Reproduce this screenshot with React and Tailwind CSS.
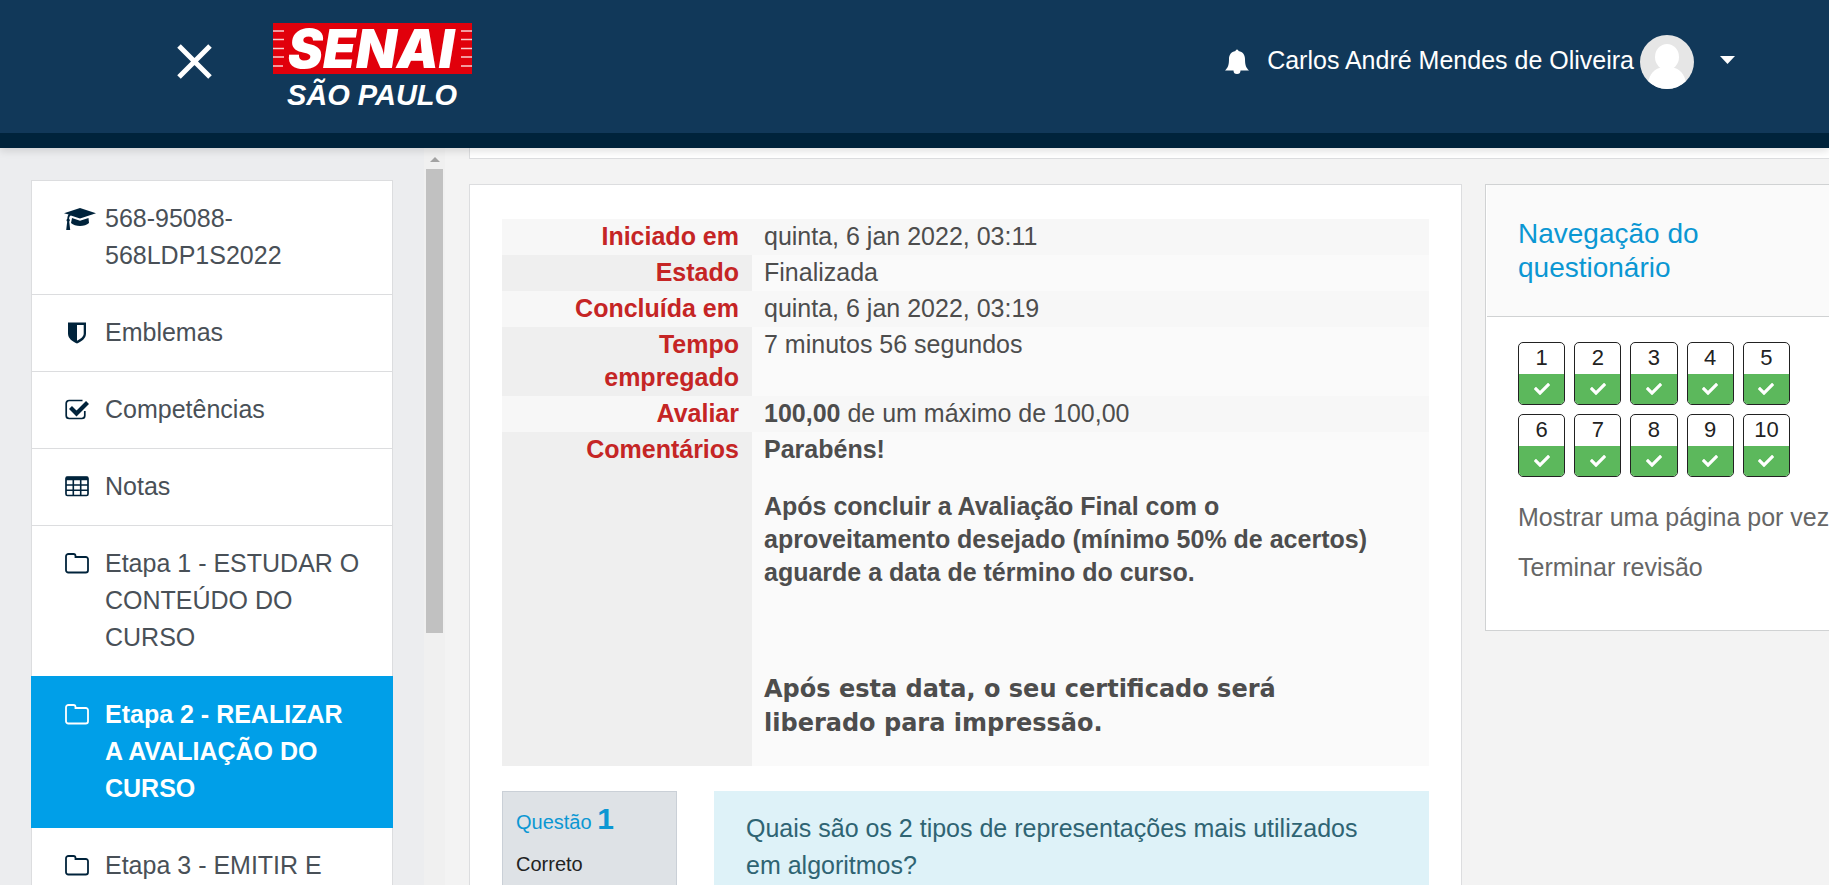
import { FaGraduationCap, FaCheck } from "react-icons/fa";

const navItems = [
  { icon: "cap", label: "568-95088-568LDP1S2022" },
  { icon: "shield", label: "Emblemas" },
  { icon: "check", label: "Competências" },
  { icon: "table", label: "Notas" },
  { icon: "folder", label: "Etapa 1 - ESTUDAR O CONTEÚDO DO CURSO" },
  { icon: "folder", label: "Etapa 2 - REALIZAR A AVALIAÇÃO DO CURSO", active: true },
  { icon: "folder", label: "Etapa 3 - EMITIR E" },
];

const summary = [
  ["Iniciado em", "quinta, 6 jan 2022, 03:11"],
  ["Estado", "Finalizada"],
  ["Concluída em", "quinta, 6 jan 2022, 03:19"],
  ["Tempo empregado", "7 minutos 56 segundos"],
  ["Avaliar", <><b>100,00</b> de um máximo de 100,00</>],
];

function NavIcon({ name }) {
  if (name === "cap")
    return (
      <svg viewBox="0 0 32 22" className="-ml-px h-[22px] w-8" fill="currentColor" aria-hidden="true">
        <path d="M16 0l16 5.200L16 10.400 6.800 7.400C5.600 8 5.200 9 5.100 10.800c1 .8 1 2 .1 2.800l1 8.400H2.200l1-8.400c-.9-.8-.9-2 .1-2.800.1-1.800.5-3.200 1.300-4.200L0 5.200z" />
        <path d="M8 10l8 2.800L24.500 10l.5 5c-2 2-5.500 3-9 3s-7-1-9-3z" />
      </svg>
    );
  if (name === "shield")
    return (
      <svg viewBox="0 0 20 22" className="ml-[2px] h-[22px] w-5" fill="currentColor" aria-hidden="true">
        <path fillRule="evenodd" d="M1 0.5h18v11c0 5-4.500 8-9 10C5.500 19.500 1 16.500 1 11.500zM10 3v15.800c3.500-1.800 6.700-4 6.700-7.300V3z" />
      </svg>
    );
  if (name === "check")
    return (
      <svg viewBox="0 0 24 22" className="h-[22px] w-6" fill="none" stroke="currentColor" aria-hidden="true">
        <path d="M17.500 1.500H4.200A3 3 0 0 0 1.200 4.500v12a3 3 0 0 0 3 3h12.600a3 3 0 0 0 3-3v-4.500" strokeWidth="1.700" />
        <path d="M5.500 8.500l6 6L22.500 3.500" strokeWidth="4.200" />
      </svg>
    );
  if (name === "table")
    return (
      <svg viewBox="0 0 24 22" className="h-[22px] w-6" fill="none" stroke="currentColor" aria-hidden="true">
        <rect x="1" y="1" width="22" height="18.500" rx="1.500" strokeWidth="1.700" />
        <path d="M1 2.500h22" strokeWidth="3.500" />
        <path d="M1 9h22M1 14.300h22M8.300 4v16M15.700 4v16" strokeWidth="1.600" />
      </svg>
    );
  return (
    <svg viewBox="0 0 24 22" className="h-[22px] w-6" fill="none" stroke="currentColor" strokeWidth="1.800" aria-hidden="true">
      <path d="M1 3.500a2.500 2.500 0 0 1 2.500-2.500h5A2 2 0 0 1 10.500 3v1h10.300A2.200 2.200 0 0 1 23 6.200v11A2.300 2.300 0 0 1 20.700 19.500H3.300A2.300 2.300 0 0 1 1 17.200z" />
    </svg>
  );
}

function Logo() {
  return (
    <a href="#inicio" aria-label="SENAI São Paulo">
      <svg viewBox="0 0 200 88" className="h-[88px] w-[200px] overflow-visible" aria-hidden="true">
        <rect width="199" height="51" fill="#e1000b" />
        <path
          d="M0 8h11M0 16.500h11M0 25.500h11M0 34h11M0 43h10M188 8h11M188 16.500h11M188 25.500h11M188 34h11M188 43h11"
          stroke="#fff"
          strokeOpacity="0.8"
          strokeWidth="1.700"
        />
        <text x="98" y="45" textAnchor="middle" fill="#fff" fontFamily="Inter, Arial, sans-serif" fontSize="53" fontWeight="900" fontStyle="italic">
          SENAI
        </text>
        <text x="99" y="82" textAnchor="middle" fill="#fff" fontFamily="Liberation Sans, Arial, sans-serif" fontSize="29" fontWeight="700" fontStyle="italic">
          SÃO PAULO
        </text>
      </svg>
    </a>
  );
}

function Header() {
  return (
    <header className="relative z-10 flex h-[148px] shrink-0 items-start border-b-[15px] border-[#00233b] bg-[#113859] pt-[23px] pr-[94px] pl-[177px] text-white shadow-[0_3px_8px_rgba(0,0,0,0.12)]">
      <button type="button" aria-label="Fechar menu" className="mt-[21px] mr-[61px]">
        <svg viewBox="0 0 35 35" className="size-[35px]" fill="none" stroke="currentColor" strokeWidth="5" aria-hidden="true">
          <path d="M2 2l31 31M33 2L2 33" />
        </svg>
      </button>
      <Logo />
      <div className="ml-auto flex h-[78px] items-center">
        <button type="button" aria-label="Notificações" className="mr-[18px]">
          <svg viewBox="0 0 24 26" className="h-[26px] w-6" fill="currentColor" aria-hidden="true">
            <path d="M10.500 2a1.500 1.500 0 0 1 3 0C18 2.800 20 6 20 10c0 6 1 8.500 4 11.500H15.500a3.500 3.500 0 0 1-7 0H0C3 18.500 4 16 4 10c0-4 2-7.200 6.500-8z" />
          </svg>
        </button>
        <button type="button" className="flex items-center whitespace-nowrap text-[25px] leading-[37px]">
          <span className="pb-1">Carlos André Mendes de Oliveira</span>
          <svg viewBox="0 0 54 54" className="ml-[6px] size-[54px] rounded-full" aria-hidden="true">
            <rect width="54" height="54" fill="#e6e6e6" />
            <ellipse cx="27" cy="22" rx="12" ry="13" fill="#fff" />
            <path d="M22 32h10c8 2 12 7 14 15v7H8v-7c2-8 6-13 14-15z" fill="#fff" />
          </svg>
          <svg viewBox="0 0 15 8" className="mb-1 ml-[26px] h-2 w-[15px]" fill="currentColor" aria-hidden="true">
            <path d="M0 0h15L7.500 8z" />
          </svg>
        </button>
      </div>
    </header>
  );
}

function Sidebar() {
  return (
    <aside className="flex w-[445px] shrink-0 items-start overflow-hidden bg-[#ecedef]">
      <nav className="mt-8 mr-[31px] ml-[31px] flex-1 border border-[#dcdddf] bg-white">
        {navItems.map((item) => (
          <a
            key={item.label}
            href="#secao"
            className={
              item.active
                ? "-mx-px -mt-px flex border-b border-[#009fe8] bg-[#009fe8] pt-5 pr-8 pb-5 pl-[34px] font-bold text-white"
                : "flex border-b border-[#dcdddf] pt-[19px] pr-7 pb-5 pl-[33px] text-[#495057]"
            }
          >
            <span className={item.active ? "flex h-[37px] w-[40px] shrink-0 items-center text-white" : "flex h-[37px] w-[40px] shrink-0 items-center text-[#00233b]"}>
              <NavIcon name={item.icon} />
            </span>
            <span>{item.label}</span>
          </a>
        ))}
      </nav>
      <div className="flex w-[21px] flex-col items-center self-stretch bg-[#f0f0f0]" aria-hidden="true">
        <svg viewBox="0 0 10 5" className="mt-[9px] mb-[7px] h-[5px] w-[10px]" fill="#a3a3a3">
          <path d="M0 5h10L5 0z" />
        </svg>
        <div className="h-[464px] w-[17px] bg-[#c1c1c1]" />
      </div>
    </aside>
  );
}

function SummaryTable() {
  return (
    <table className="w-full table-fixed border-collapse text-left align-top text-[#4d4d4d]">
      <colgroup>
        <col className="w-[250px]" />
        <col />
      </colgroup>
      <tbody className="align-top leading-[33px]">
        {summary.map(([label, value]) => (
          <tr key={label} className="odd:bg-[#f7f7f7] even:bg-[#fafafa]">
            <th scope="row" className="pt-px pr-[13px] pb-[2px] pl-10 text-right font-bold text-[#c52525] [tr:nth-child(even)>&]:bg-[#efefef]">
              {label}
            </th>
            <td className="px-3 pt-px pb-[2px]">{value}</td>
          </tr>
        ))}
        <tr className="bg-[#fafafa]">
          <th scope="row" className="bg-[#efefef] pt-px pr-[13px] pl-10 text-right font-bold text-[#c52525]">
            Comentários
          </th>
          <td className="pt-px pr-12 pb-[26px] pl-3 font-bold">
            <p className="mb-6">Parabéns!</p>
            <p className="mb-6">Após concluir a Avaliação Final com o aproveitamento desejado (mínimo 50% de acertos) aguarde a data de término do curso.</p>
            <p className="mb-[26px]">&nbsp;</p>
            <p className="font-['DejaVu_Sans',sans-serif] text-[24px] leading-[34px]">Após esta data, o seu certificado será liberado para impressão.</p>
          </td>
        </tr>
      </tbody>
    </table>
  );
}

function QuizNavigation() {
  return (
    <section className="-mr-12 w-[392px] shrink-0 border border-[#d0d2d3] bg-white pb-[44px]">
      <h2 className="ml-px border-b border-[#d0d2d3] bg-[#fafafa] px-[31px] pt-8 pb-[31px] text-[28px] leading-[34px] text-[#0b97d3]">
        Navegação do
        <br />
        questionário
      </h2>
      <div className="pt-[25px] pl-8">
        <div className="grid w-[272px] grid-cols-5 gap-x-[9px] gap-y-[9px]">
          {[1, 2, 3, 4, 5, 6, 7, 8, 9, 10].map((n) => (
            <a key={n} href="#questao" className="flex h-[63px] flex-col overflow-hidden rounded-[5px] border border-[#222] text-center text-[22px] leading-[29px] text-[#222]">
              <span className="h-[31px]">{n}</span>
              <span className="flex flex-1 items-center justify-center bg-[#5cb85c] text-white">
                <FaCheck className="size-4" />
              </span>
            </a>
          ))}
        </div>
        <a href="#pagina" className="mt-[22px] block whitespace-nowrap leading-[37px] text-[#666]">Mostrar uma página por vez</a>
        <a href="#terminar" className="mt-[13px] block leading-[37px] text-[#666]">Terminar revisão</a>
      </div>
    </section>
  );
}

export default function App() {
  return (
    <div className="flex h-screen flex-col overflow-hidden bg-[#f3f3f3] font-['Liberation_Sans',Arial,sans-serif] text-[25px] leading-[37px]">
      <Header />
      <div className="flex min-h-0 flex-1">
        <Sidebar />
        <main className="min-w-0 flex-1 overflow-hidden pl-6">
          <div className="h-[11px] border-b border-l border-[#dcdddf] bg-white" />
          <div className="mt-[25px] flex items-start gap-[23px]">
            <section className="min-w-0 flex-1 border border-[#dcdddf] bg-white px-8 pt-[34px] pb-12">
              <SummaryTable />
              <div className="mt-[25px] flex items-start gap-[37px]">
                <div className="h-48 w-[175px] shrink-0 border border-[#cad0d7] bg-[#dee2e6] px-[13px] pt-[7px] text-[20px] text-[#222]">
                  <h3 className="leading-[40px] text-[#0b97d3]">
                    Questão <b className="text-[30px]">1</b>
                  </h3>
                  <p className="mt-1 leading-[37px]">Correto</p>
                </div>
                <div className="h-48 flex-1 bg-[#def2f8] px-8 pt-[19px] text-[#2f6473]">
                  Quais são os 2 tipos de representações mais utilizados em algoritmos?
                </div>
              </div>
            </section>
            <QuizNavigation />
          </div>
        </main>
      </div>
    </div>
  );
}
